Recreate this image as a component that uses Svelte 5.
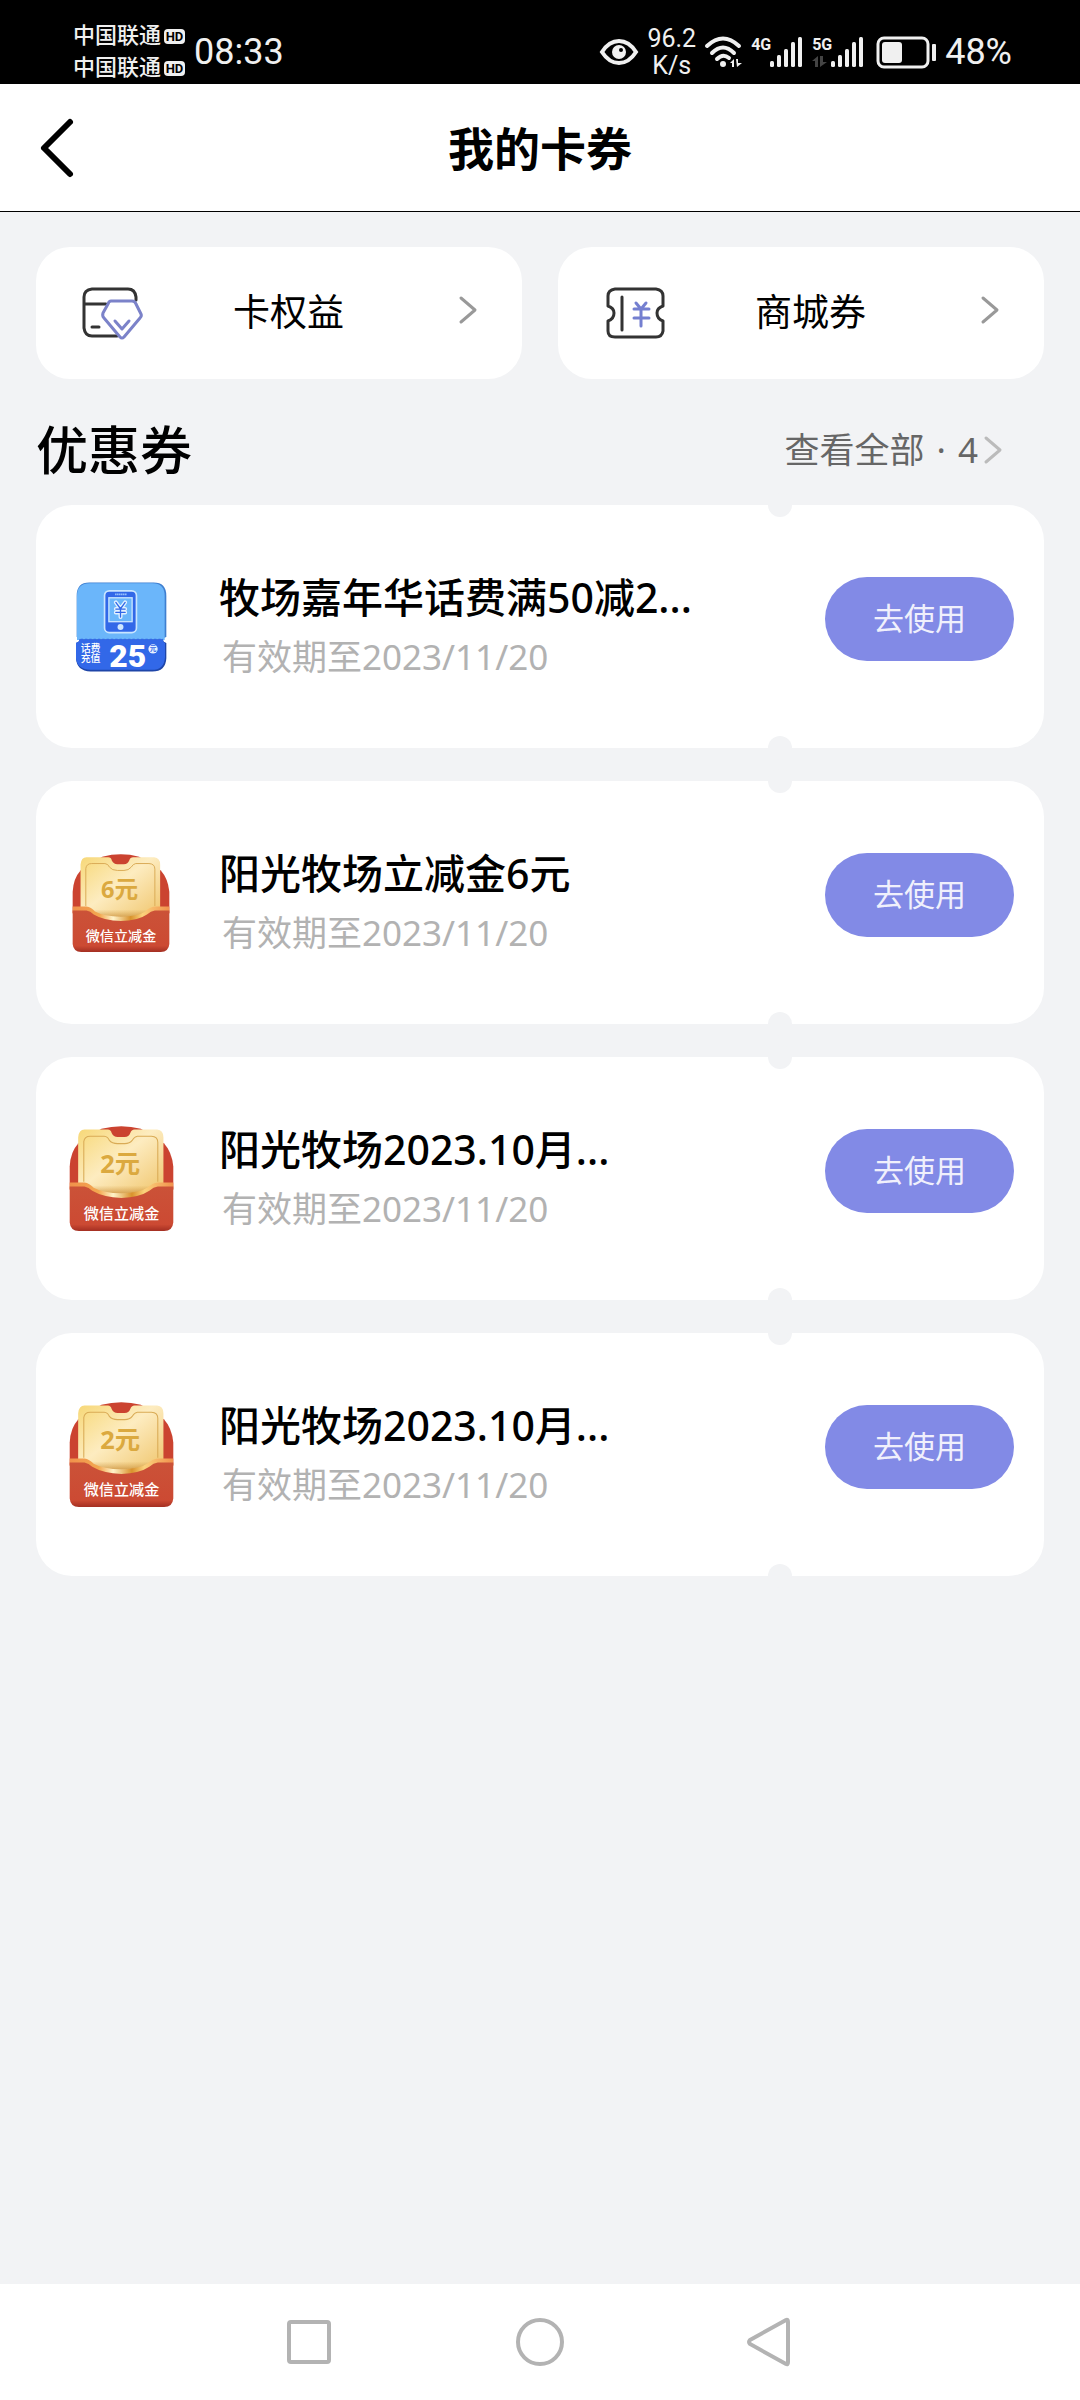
<script>
  const coupons = [
    { kind: 'phone', title: '牧场嘉年华话费满50减2...', date: '2023/11/20' },
    { kind: 'packet', size: 98, amount: '6元', title: '阳光牧场立减金6元', date: '2023/11/20' },
    { kind: 'packet', size: 105, amount: '2元', title: '阳光牧场2023.10月...', date: '2023/11/20' },
    { kind: 'packet', size: 105, amount: '2元', title: '阳光牧场2023.10月...', date: '2023/11/20' },
  ];

  const bars = [6, 12, 18, 25, 30];
</script>

{#snippet signal()}
  <svg width="33" height="30" viewBox="0 0 33 30" fill="#f0f0f0">
    {#each bars as h, i}
      <rect x={i * 7} y={30 - h} width="4" height={h} rx="1.5" />
    {/each}
  </svg>
{/snippet}

{#snippet chevron()}
  <svg class="chevron" width="18" height="28" viewBox="0 0 18 28" fill="none" stroke="currentColor" stroke-width="3" stroke-linecap="round" stroke-linejoin="round">
    <path d="M2 2 L16 14 L2 26" />
  </svg>
{/snippet}

{#snippet phoneIcon()}
  <svg width="91" height="90" viewBox="0 0 274 268">
    <path d="M40 0 H234 Q272 0 272 40 V164 Q262 166 262 173 H10 Q10 166 2 164 V40 Q2 0 40 0Z" fill="#3f7fd0" />
    <path d="M42 2 H230 Q267 2 267 40 V173 H3 V40 Q3 2 42 2Z" fill="#6bb6fa" />
    <path d="M0 182 Q10 180 10 172 H262 Q262 180 272 182 V228 Q270 268 230 268 H44 Q2 266 0 228Z" fill="#1e45a8" />
    <path d="M0 182 Q10 180 10 172 H262 Q262 180 268 182 V224 Q266 263 228 263 H44 Q4 262 0 228Z" fill="#3268e8" />
    <path d="M14 172 H262" stroke="#3268e8" stroke-width="5" stroke-dasharray="7 6" />
    <rect x="86" y="25" width="96" height="126" rx="14" fill="#3268e8" stroke="#c9e5ff" stroke-width="5" />
    <rect x="99" y="46" width="70" height="72" fill="#6bb6fa" stroke="#c9e5ff" stroke-width="4" />
    <path d="M118 36 H152" stroke="#a8d0ff" stroke-width="5" stroke-dasharray="4 2" />
    <g fill="none" stroke-linecap="round" stroke-linejoin="round">
      <path d="M120 60 L134 79 L148 60 M134 79 V104 M120 80 H148 M120 90 H148" stroke="#e4f2ff" stroke-width="12" />
      <path d="M120 60 L134 79 L148 60 M134 79 V104 M120 80 H148 M120 90 H148" stroke="#3268e8" stroke-width="4" />
    </g>
    <circle cx="134" cy="134" r="9" fill="#cfe7ff" />
    <g fill="#fff">
      <text x="14" y="209" font-size="30" font-weight="500">话费</text>
      <text x="14" y="240" font-size="30" font-weight="500">充值</text>
      <text class="amount" x="100" y="255" font-size="96">25</text>
    </g>
    <circle cx="232" cy="200" r="14" fill="#e8f1ff" />
    <text x="222" y="207" font-size="20" font-weight="700" fill="#3268e8">元</text>
  </svg>
{/snippet}

{#snippet packetIcon(amount, size)}
  <svg width={size} height={size} viewBox="0 0 294 298">
    <defs>
      <linearGradient id="card-gold" x1="0" y1="0" x2="1" y2="1">
        <stop offset="0" stop-color="#f7d878" />
        <stop offset="0.45" stop-color="#fdecc0" />
        <stop offset="1" stop-color="#efc368" />
      </linearGradient>
      <linearGradient id="card-shade" x1="0" y1="0" x2="0" y2="1">
        <stop offset="0.6" stop-color="#c98a2c" stop-opacity="0" />
        <stop offset="1" stop-color="#b87622" stop-opacity="0.8" />
      </linearGradient>
      <linearGradient id="rim" x1="0" y1="0" x2="1" y2="0">
        <stop offset="0" stop-color="#f0914c" />
        <stop offset="0.28" stop-color="#f3a850" />
        <stop offset="0.42" stop-color="#fff3c9" />
        <stop offset="0.6" stop-color="#d9922c" />
        <stop offset="0.72" stop-color="#fbd27c" />
        <stop offset="1" stop-color="#f0914c" />
      </linearGradient>
      <linearGradient id="pocket" x1="0" y1="0" x2="0" y2="1">
        <stop offset="0" stop-color="#cb5238" />
        <stop offset="0.85" stop-color="#cc4a33" />
        <stop offset="1" stop-color="#a42f22" />
      </linearGradient>
    </defs>
    <path d="M0 180 V115 Q2 74 24 50 L90 8 Q147 -7 202 8 L268 50 Q290 74 294 115 V180Z" fill="#cb4330" />
    <path d="M42 10 H108 Q117 10 119 20 Q124 31 136 31 H156 Q168 31 172 20 Q175 10 184 10 H248 Q266 12 266 32 V170 L220 190 Q147 212 70 190 L24 170 V32 Q26 10 42 10Z" fill="url(#card-gold)" />
    <path d="M24 120 H266 V170 L220 190 Q147 212 70 190 L24 170Z" fill="url(#card-shade)" />
    <path d="M40 158 V44 Q42 29 58 29 H98 Q108 30 112 40 Q120 50 136 50 H156 Q170 50 178 40 Q184 30 192 29 H232 Q250 30 250 46 V158" fill="none" stroke="#d9ab56" stroke-width="3" />
    <path d="M0 160 H42 Q56 162 68 175 Q95 190 147 191 Q200 190 222 174 Q234 162 250 160 H294 V180 L220 208 H70 L0 180Z" fill="url(#rim)" />
    <path d="M0 172 H42 Q54 174 64 184 Q96 203 147 204 Q198 203 226 184 Q238 173 250 172 H294 V274 Q292 298 268 298 H26 Q2 298 0 274Z" fill="url(#pocket)" />
    <text x="143" y="134" font-size="72" font-weight="700" fill="#dba93f" text-anchor="middle">{amount}</text>
    <text x="147" y="264" font-size="43" font-weight="500" fill="#fff" text-anchor="middle">微信立减金</text>
  </svg>
{/snippet}

<div class="page">
  <div class="status">
    <div class="carriers">
      <div>中国联通<span class="hd">HD</span></div>
      <div>中国联通<span class="hd">HD</span></div>
    </div>
    <span class="big">08:33</span>

    <div class="indicators">
      <svg width="38" height="26" viewBox="0 0 38 26">
        <path d="M2 13 Q9 2 19 2 Q29 2 36 13 Q29 24 19 24 Q9 24 2 13Z" fill="none" stroke="#f0f0f0" stroke-width="4" />
        <circle cx="19" cy="13" r="7" fill="#f0f0f0" />
        <circle cx="21" cy="11" r="2" fill="#000" />
      </svg>
      <div class="speed">96.2<br />K/s</div>
      <svg width="37" height="32" viewBox="0 0 37 32" fill="none" stroke="#f0f0f0" stroke-width="4" stroke-linecap="round">
        <path d="M2 10 Q18 -5 34 10" />
        <path d="M7 17 Q18 6 29 17" />
        <path d="M12 23 Q18 17 24 22" />
        <circle cx="18" cy="28" r="3" fill="#f0f0f0" stroke="none" />
        <path d="M25 27 L29 23 V31 H27 V27Z M31 23 H33 V27 H37 L32 31Z" fill="#f0f0f0" stroke="none" />
      </svg>
      <div class="cell">
        <span class="gen">4G</span>
        {@render signal()}
      </div>
      <div class="cell">
        <div class="gen">
          5G
          <svg width="15" height="11" viewBox="0 0 15 11" fill="#444">
            <path d="M0 5 L6 0 V11 H3 V5Z M8 0 H11 V6 H15 L8 11Z" />
          </svg>
        </div>
        {@render signal()}
      </div>
      <svg class="battery" width="60" height="33" viewBox="0 0 60 33">
        <rect x="2" y="2" width="50" height="29" rx="6" fill="none" stroke="#f0f0f0" stroke-width="3" />
        <rect x="6" y="6" width="20" height="21" rx="3" fill="#f0f0f0" />
        <rect x="56" y="8" width="4" height="17" rx="1" fill="#f0f0f0" />
      </svg>
      <span class="big">48%</span>
    </div>
  </div>

  <header>
    <button class="back" aria-label="返回">
      <svg width="34" height="60" viewBox="0 0 34 60" fill="none" stroke="#000" stroke-width="6" stroke-linecap="round" stroke-linejoin="round">
        <path d="M30 4 L4 30 L30 56" />
      </svg>
    </button>
    <h1>我的卡券</h1>
  </header>

  <main>
    <nav class="links">
      <a class="link" href="#benefits">
        <svg width="60" height="52" viewBox="0 0 60 52" fill="none" stroke-width="3" stroke-linejoin="round" stroke-linecap="round">
          <path d="M54 13 V10 Q53 2 46 2 H10 Q2 3 2 10 V41 Q3 49 10 49 H35 M2 17 H24" stroke="#333" />
          <path d="M10 40 H17" stroke="#333" />
          <path d="M29 14 H50 Q53 14 54 17 L59 27 Q60 29 58 31 L42 50 Q40 52 38 50 L22 31 Q20 29 21 26 L26 17 Q27 14 29 14Z" fill="#fff" stroke="#7b82c9" />
          <path d="M33 34 L40 42 L47 34" stroke="#7b82c9" />
        </svg>
        <span>卡权益</span>
        {@render chevron()}
      </a>
      <a class="link" href="#mall">
        <svg width="60" height="52" viewBox="0 0 60 52" fill="none" stroke-width="3" stroke-linejoin="round" stroke-linecap="round">
          <path d="M11 2 H52 Q59 3 59 9 V19 Q53 21 53 26 Q53 32 59 34 V44 Q58 50 52 50 H11 Q4 50 4 44 V34 Q10 32 10 26 Q10 21 4 19 V9 Q4 3 11 2Z" stroke="#333" />
          <path d="M18 10 V43" stroke="#333" />
          <path d="M32 16 L37 22 L42 16 M30 22 H45 M30 31 H45 M37 22 V39" stroke="#747fd0" />
        </svg>
        <span>商城券</span>
        {@render chevron()}
      </a>
    </nav>

    <div class="heading">
      <h2>优惠券</h2>
      <a class="all" href="#all"><span>查看全部 <span class="dot">·</span> 4</span>{@render chevron()}</a>
    </div>

    <ul class="coupons">
      {#each coupons as coupon}
        <li class="coupon">
          <div class="thumb">
            {#if coupon.kind === 'phone'}
              {@render phoneIcon()}
            {:else}
              {@render packetIcon(coupon.amount, coupon.size)}
            {/if}
          </div>
          <div class="info">
            <h3>{coupon.title}</h3>
            <p>有效期至{coupon.date}</p>
          </div>
          <button class="use">去使用</button>
        </li>
      {/each}
    </ul>
  </main>

  <footer>
    <button aria-label="最近任务">
      <svg width="48" height="48" viewBox="0 0 48 48"><rect x="3" y="4" width="40" height="40" rx="2" /></svg>
    </button>
    <button aria-label="主页">
      <svg width="48" height="48" viewBox="0 0 48 48"><circle cx="24" cy="24" r="22" /></svg>
    </button>
    <button aria-label="后退">
      <svg width="48" height="48" viewBox="0 0 48 48"><path d="M4 22 L40 2 Q42 1 42 4 V44 Q42 47 40 46 L4 26 Q2 24 4 22Z" /></svg>
    </button>
  </footer>
</div>

<style>
  :global(body) {
    margin: 0;
    background: #f2f3f5;
  }
  .page {
    display: flex;
    flex-direction: column;
    min-height: 100vh;
    font-family: 'Noto Sans', 'Noto Sans CJK SC', sans-serif;
    color: #000;
  }
  h1, h2, h3, p, ul {
    margin: 0;
    padding: 0;
  }
  svg {
    display: block;
    flex: none;
    overflow: visible;
  }
  button {
    padding: 0;
    border: 0;
    background: none;
    font-family: inherit;
    cursor: pointer;
  }
  a {
    color: inherit;
    text-decoration: none;
  }

  .status {
    display: flex;
    align-items: center;
    height: 64px;
    padding: 20px 68px 0 73px;
    background: #000;
    color: #f0f0f0;
    font-family: Roboto, 'Noto Sans CJK SC', sans-serif;
  }
  .carriers {
    margin-right: 9px;
    font-size: 22px;
    font-weight: 500;
    line-height: 32px;
  }
  .carriers div {
    display: flex;
    align-items: center;
    gap: 3px;
  }
  .hd {
    width: 21px;
    border-radius: 4px;
    background: #f0f0f0;
    color: #000;
    font-size: 13px;
    font-weight: 700;
    line-height: 15px;
    text-align: center;
  }
  .big {
    font-size: 36px;
    line-height: 40px;
  }
  .indicators {
    display: flex;
    align-items: center;
    gap: 9px;
    margin-left: auto;
  }
  .speed {
    font-size: 25px;
    line-height: 27px;
    text-align: center;
  }
  .cell {
    display: flex;
    align-items: flex-end;
  }
  .gen {
    align-self: flex-start;
    width: 19px;
    font-size: 16px;
    font-weight: 700;
    line-height: 16px;
  }
  .gen svg {
    margin-top: 3px;
  }
  .battery {
    margin-left: 3px;
  }

  header {
    display: grid;
    grid-template-columns: 1fr auto 1fr;
    align-items: center;
    height: 127px;
    padding: 0 40px;
    border-bottom: 1px solid #000;
    background: #fff;
  }
  .back {
    justify-self: start;
  }
  h1 {
    font-size: 46px;
    font-weight: 700;
    line-height: 60px;
  }

  main {
    flex: 1;
    padding: 35px 36px;
  }
  .links {
    display: grid;
    grid-template-columns: 1fr 1fr;
    gap: 36px;
  }
  .link {
    display: flex;
    align-items: center;
    height: 132px;
    padding: 0 45px 0 46px;
    border-radius: 34px;
    background: #fff;
    color: #999;
    font-size: 37px;
  }
  .link span {
    margin: 0 auto 0 91px;
    padding-bottom: 6px;
    color: #000;
  }
  .link .chevron {
    margin-bottom: 6px;
  }
  .heading {
    display: flex;
    align-items: center;
    justify-content: space-between;
    box-sizing: border-box;
    height: 126px;
    padding: 10px 42px 0 0;
  }
  h2 {
    font-size: 52px;
    font-weight: 500;
  }
  .all {
    display: flex;
    align-items: center;
    gap: 6px;
    color: #666;
    font-size: 35px;
  }
  .dot {
    margin: 0 3px;
  }
  .all .chevron {
    margin-top: 6px;
    color: #bbb;
  }

  .coupons {
    display: flex;
    flex-direction: column;
    gap: 33px;
    list-style: none;
  }
  .coupon {
    position: relative;
    display: flex;
    align-items: center;
    height: 243px;
    padding: 0 30px 0 32px;
    border-radius: 36px;
    background: #fff;
  }
  .coupon::before,
  .coupon::after {
    content: '';
    position: absolute;
    right: 252px;
    width: 24px;
    height: 24px;
    border-radius: 50%;
    background: #f2f3f5;
  }
  .coupon::before {
    top: -12px;
  }
  .coupon::after {
    bottom: -12px;
  }
  .thumb {
    display: flex;
    justify-content: center;
    width: 106px;
    margin-right: 45px;
  }
  .amount {
    font-family: Roboto, sans-serif;
    font-weight: 900;
  }
  .info {
    flex: 1;
    line-height: 59px;
    white-space: nowrap;
  }
  h3 {
    font-size: 41px;
    font-weight: 500;
  }
  .info p {
    padding-left: 3px;
    color: #b2b2b2;
    font-size: 35px;
  }
  .use {
    width: 189px;
    height: 84px;
    margin-bottom: 16px;
    padding-bottom: 4px;
    border-radius: 42px;
    background: #828ae6;
    color: #f0f0fc;
    font-size: 31px;
  }

  footer {
    display: flex;
    justify-content: center;
    gap: 182px;
    height: 116px;
    background: #fff;
  }
  footer svg {
    fill: none;
    stroke: #b3b3b3;
    stroke-width: 4;
  }
</style>
